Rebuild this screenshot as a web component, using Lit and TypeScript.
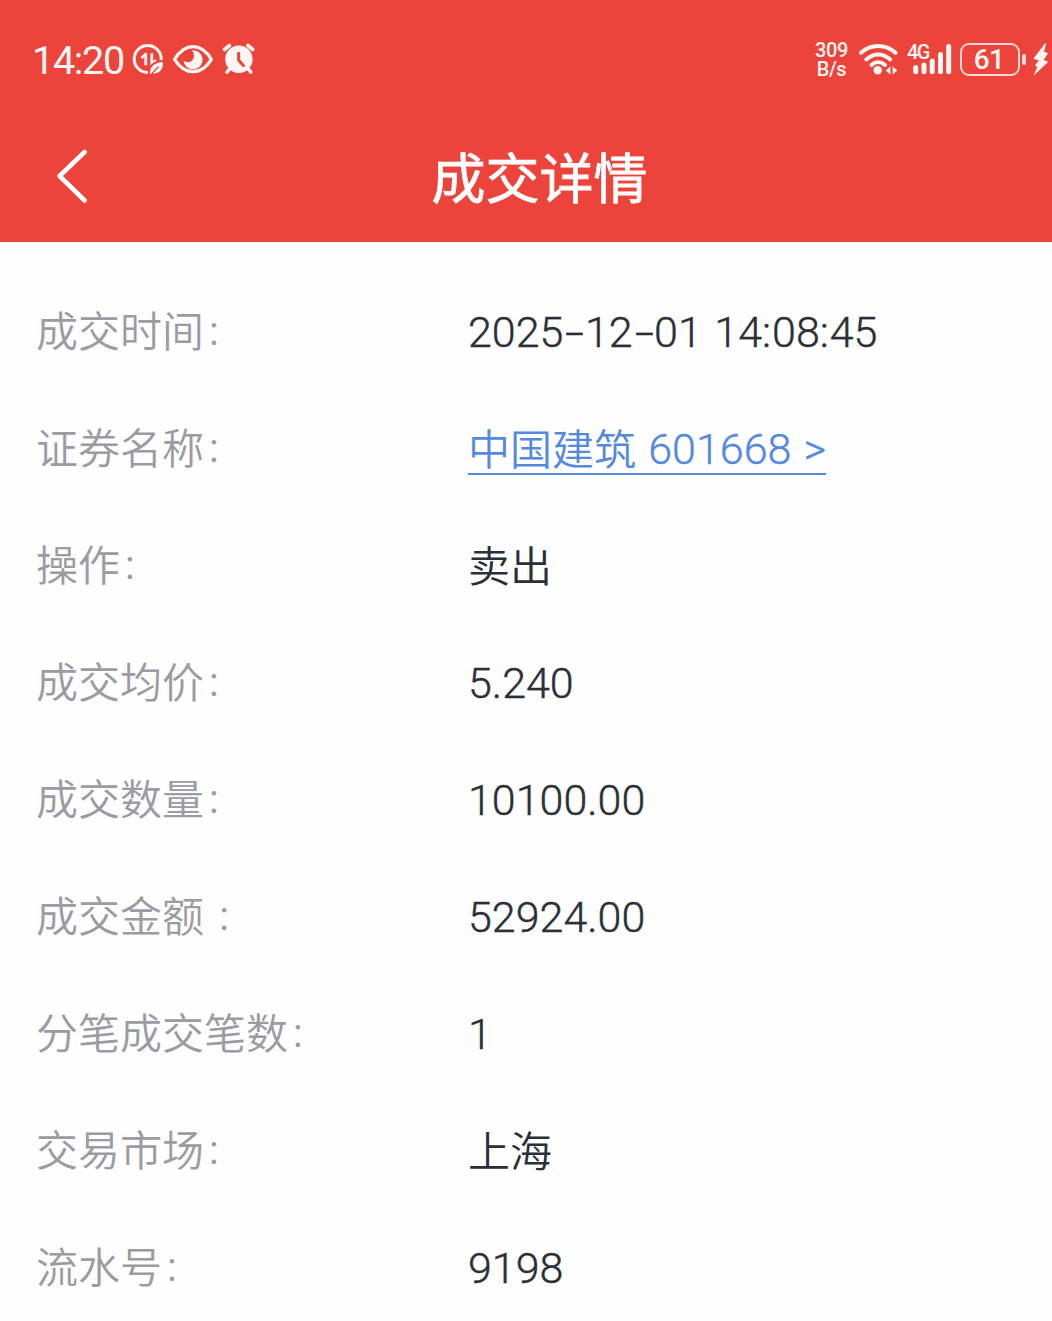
import { LitElement, html, css, nothing } from "lit";
import { customElement, property } from "lit/decorators.js";

interface Detail {
  label: string;
  value: string;
  kind?: "date" | "link" | "cjk";
}

const DETAILS: Detail[] = [
  { label: "成交时间", value: "2025-12-01 14:08:45", kind: "date" },
  { label: "证券名称", value: "601668 >", kind: "link" },
  { label: "操作", value: "卖出", kind: "cjk" },
  { label: "成交均价", value: "5.240" },
  { label: "成交数量", value: "10100.00" },
  { label: "成交金额 ", value: "52924.00" },
  { label: "分笔成交笔数", value: "1" },
  { label: "交易市场", value: "上海", kind: "cjk" },
  { label: "流水号", value: "9198" },
];

@customElement("status-bar")
class StatusBar extends LitElement {
  static styles = css`
    :host {
      display: flex;
      justify-content: space-between;
      align-items: flex-start;
      height: 118px;
      padding: 42px 3px 0 32px;
      box-sizing: border-box;
      color: #fff5f3;
      font-family: Roboto, "Noto Sans CJK SC", sans-serif;
    }
    .side {
      display: flex;
      align-items: center;
      height: 34px;
    }
    svg {
      display: block;
      flex: none;
      overflow: visible;
    }
    .clock {
      width: 100px;
      font-size: 39.5px;
      line-height: 35px;
      letter-spacing: -1.3px;
      white-space: nowrap;
      padding-top: 2px;
    }
    .eye,
    .alarm {
      margin-left: 9px;
    }
    .speed {
      width: 44px;
      font-size: 20px;
      font-weight: 500;
      line-height: 18.5px;
      letter-spacing: -0.4px;
      white-space: nowrap;
      padding-top: 1px;
    }
    .speed div {
      width: 33px;
      text-align: center;
    }
    .cell {
      margin-left: 9px;
    }
    .cell text {
      font-size: 20px;
      font-weight: 500;
      letter-spacing: -1.6px;
    }
    .battery {
      display: flex;
      align-items: center;
      margin-left: 8px;
    }
    .level {
      width: 60px;
      height: 33px;
      box-sizing: border-box;
      border: 2.5px solid #ffd9d5;
      border-radius: 9px;
      text-align: center;
      font-size: 28px;
      font-weight: 500;
      line-height: 30px;
      letter-spacing: -0.6px;
      padding-right: 2px;
    }
    .nub {
      width: 4px;
      height: 11px;
      margin: 0 7px 0 2px;
      border-radius: 2px;
      background: #ffd9d5;
    }
  `;

  render() {
    return html`
      <div class="side">
        <div class="clock">14:20</div>
        <svg width="32" height="34" viewBox="132 42 32 34" fill="none">
          <circle cx="147.700" cy="59" r="13.500" stroke="#fff5f3" stroke-width="3" />
          <path
            d="M141.500 58L145.800 54V65.200M151.800 53.200V64L156.200 60.200"
            stroke="#fff5f3"
            stroke-width="2.800"
            stroke-linejoin="round"
          />
          <path
            d="M164 61C164.500 70 160 75.500 152.500 74.200L149 76C148 67 153 61 164 61Z"
            fill="#fff5f3"
            stroke="#ec433b"
            stroke-width="2"
          />
          <path d="M151.500 74L158.500 66.500" stroke="#ec433b" stroke-width="1.200" />
        </svg>
        <svg class="eye" width="40" height="34" viewBox="173 42 40 34" fill="none">
          <path
            d="M174.600 59.300C179.500 51.300 185.500 46.700 193 46.700S206.500 51.300 211.400 59.300C206.500 67.200 200.500 71.700 193 71.700S179.500 67.200 174.600 59.300Z"
            stroke="#fff5f3"
            stroke-width="3.200"
            stroke-linejoin="round"
          />
          <path
            d="M192 50.200A9.600 9.600 0 1 1 183.500 60.800C186.500 63 191 62.600 192.900 59.600C194.600 57 194.200 53 192 50.200Z"
            fill="#fff5f3"
          />
        </svg>
        <svg class="alarm" width="34" height="34" viewBox="222 42 34 34" fill="none">
          <circle cx="238.900" cy="59.300" r="13.700" fill="#fff5f3" />
          <path
            d="M224.500 49.500L229.500 45.500M252.700 49.500L247.900 45.500M229.500 69L227 72.200M248.300 69L250.800 72.200"
            stroke="#fff5f3"
            stroke-width="3.600"
            stroke-linecap="round"
          />
          <path
            d="M238.600 53.300V60.200L243.400 65.600"
            stroke="#ec433b"
            stroke-width="3"
            stroke-linecap="round"
            stroke-linejoin="round"
          />
        </svg>
      </div>
      <div class="side">
        <div class="speed">
          <div>309</div>
          <div>B/s</div>
        </div>
        <svg width="39" height="34" viewBox="859 42 39 34" fill="none">
          <path
            d="M861 52.800C871 43.800 885.500 43.800 895.500 52.800M866.300 59.500C873.500 52.700 883 52.700 890.200 59.500M871.500 65C875.500 61.400 881 61.400 885 65"
            stroke="#fff5f3"
            stroke-width="4"
            stroke-linecap="round"
          />
          <circle cx="877.700" cy="70.200" r="4.200" fill="#fff5f3" />
          <path d="M885.800 70.500L890.400 66.500V74.500ZM897.400 70.500L892.600 66.500V74.500Z" fill="#fff5f3" />
        </svg>
        <svg class="cell" width="45" height="34" viewBox="907 42 45 34">
          <text x="907" y="58.500" fill="#fff5f3">4G</text>
          <path
            d="M915.700 67.500V71.700M924 65V71.700M932.200 61V71.700M940.500 54.500V71.700M948.700 46.500V71.700"
            fill="none"
            stroke="#fff5f3"
            stroke-width="5"
            stroke-linecap="round"
          />
        </svg>
        <div class="battery">
          <div class="level">61</div>
          <div class="nub"></div>
        </div>
        <svg width="16" height="34" viewBox="1033 42 16 34">
          <path
            d="M1045.500 43.500L1034 58.500L1039.500 60L1035.500 65.500L1038 66.500L1034.500 74.500L1047.500 62L1043 60L1047.500 53.500L1043.500 52Z"
            fill="#fff5f3"
            stroke="#fff5f3"
            stroke-width="1"
            stroke-linejoin="round"
          />
        </svg>
      </div>
    `;
  }
}

@customElement("nav-bar")
class NavBar extends LitElement {
  static styles = css`
    :host {
      display: grid;
      grid-template-columns: 115px 1fr 88px;
      align-items: center;
      height: 124px;
      padding-bottom: 8px;
      box-sizing: border-box;
    }
    .back {
      display: block;
      margin-left: 55px;
    }
    h1 {
      margin: 0;
      color: #fff;
      font-family: "Noto Sans CJK SC", sans-serif;
      font-size: 54px;
      font-weight: 400;
      -webkit-text-stroke: 0.8px currentColor;
      line-height: 80px;
      text-align: center;
    }
  `;

  render() {
    return html`
      <svg class="back" width="36" height="60" viewBox="55 146 36 60" fill="none">
        <path
          d="M84.700 152L59.500 176L84.700 200.500"
          stroke="#fff"
          stroke-width="4.600"
          stroke-linecap="round"
          stroke-linejoin="round"
        />
      </svg>
      <h1>成交详情</h1>
    `;
  }
}

@customElement("detail-row")
class DetailRow extends LitElement {
  @property({ attribute: false }) item!: Detail;

  static styles = css`
    :host {
      display: grid;
      grid-template-columns: 432px 1fr;
      align-items: center;
      height: 117px;
      font-family: Roboto, "Noto Sans CJK SC", sans-serif;
      font-size: 42px;
      font-weight: 300;
      line-height: 60px;
      white-space: nowrap;
    }
    .label {
      padding-top: 4px;
      color: #9b9ba3;
      font-weight: 350;
    }
    .colon {
      position: relative;
      top: -2px;
      margin-left: 5px;
      font-family: Roboto, sans-serif;
      font-size: 40px;
      font-weight: 400;
    }
    .value {
      color: #2b2f38;
      font-size: 43px;
      -webkit-text-stroke: 0.4px currentColor;
    }
    .cjk {
      padding-top: 4px;
      font-size: 42px;
      font-weight: 350;
      -webkit-text-stroke: 0;
    }
    .date {
      word-spacing: 2px;
    }
    .dash {
      display: inline-block;
      width: 20.5px;
      padding-left: 1px;
      text-align: center;
      transform: scaleX(1.6);
    }
    .tick {
      letter-spacing: 1px;
    }
    .link {
      justify-self: start;
      box-sizing: border-box;
      height: 52px;
      line-height: 52px;
      border-bottom: 2px solid #5489de;
      color: #5489de;
      word-spacing: 2px;
    }
    .name {
      position: relative;
      top: 1px;
      font-size: 42px;
      font-weight: 350;
      -webkit-text-stroke: 0;
    }
  `;

  private renderDate(value: string) {
    return value
      .split(/([-:])/)
      .map((part) =>
        part === "-"
          ? html`<span class="dash">-</span>`
          : part === ":"
            ? html`<span class="tick">:</span>`
            : part
      );
  }

  render() {
    const { label, value, kind } = this.item;
    return html`
      <span class="label">${label}<span class="colon">:</span></span>
      <span class="value ${kind ?? ""}"
        >${kind === "link" ? html`<span class="name">中国建筑 </span>` : nothing}${kind === "date"
          ? this.renderDate(value)
          : value}</span
      >
    `;
  }
}

@customElement("app-root")
class AppRoot extends LitElement {
  static styles = css`
    :host {
      display: block;
      height: 1321px;
      overflow: hidden;
      background: #fefefe;
    }
    header {
      height: 242px;
      background: #ec433b;
    }
    main {
      padding: 31px 36px 0;
    }
  `;

  render() {
    return html`
      <header>
        <status-bar></status-bar>
        <nav-bar></nav-bar>
      </header>
      <main>${DETAILS.map((item) => html`<detail-row .item=${item}></detail-row>`)}</main>
    `;
  }
}
